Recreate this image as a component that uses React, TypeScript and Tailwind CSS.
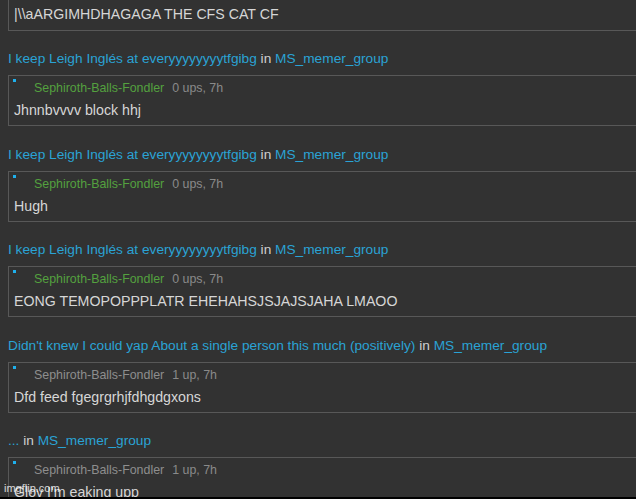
import React from 'react';

type Entry = {
  title: string;
  user: string;
  green: boolean;
  meta: string;
  text: string;
};

const entries: Entry[] = [
  { title: 'I keep Leigh Inglés at everyyyyyyyytfgibg', user: 'Sephiroth-Balls-Fondler', green: true, meta: '0 ups, 7h', text: 'Jhnnbvvvv block hhj' },
  { title: 'I keep Leigh Inglés at everyyyyyyyytfgibg', user: 'Sephiroth-Balls-Fondler', green: true, meta: '0 ups, 7h', text: 'Hugh' },
  { title: 'I keep Leigh Inglés at everyyyyyyyytfgibg', user: 'Sephiroth-Balls-Fondler', green: true, meta: '0 ups, 7h', text: 'EONG TEMOPOPPPLATR EHEHAHSJSJAJSJAHA LMAOO' },
  { title: "Didn't knew I could yap About a single person this much (positively)", user: 'Sephiroth-Balls-Fondler', green: false, meta: '1 up, 7h', text: 'Dfd feed fgegrgrhjfdhgdgxons' },
  { title: '...', user: 'Sephiroth-Balls-Fondler', green: false, meta: '1 up, 7h', text: "Glov I'm eaking upp" },
];

const CommentBox: React.FC<{ e: Entry }> = ({ e }) => (
  <div className="ml-2 border border-r-0 border-[#585858] pl-1 pt-[3px] pb-[6px]">
    <div className="flex items-start">
      <div className="w-[3px] h-[3px] bg-[#1fb0ec]" />
      <div className="ml-[18px] mt-[2px] flex items-center text-[12.4px] leading-[14px]">
        <span className={e.green ? 'text-[#54a13f]' : 'text-[#8e8e8e]'}>{e.user}</span>
        <span className="ml-[8px] text-[#8a8a8a]">{e.meta}</span>
      </div>
    </div>
    <div className="mt-[6px] pl-px text-[14.2px] leading-[18px] text-[#d6d6d6]">{e.text}</div>
  </div>
);

export default function App() {
  return (
    <div
      className="relative w-[636px] h-[499px] overflow-hidden bg-[#323232] border-b-2 border-black"
      style={{ fontFamily: '"Liberation Sans", Arial, sans-serif' }}
    >
      {/* tail of the previous comment */}
      <div className="ml-2 h-[31px] border-b border-l border-[#585858] pl-[5px] flex items-center text-[14.2px] text-[#d6d6d6]">
        |\\aARGIMHDHAGAGA THE CFS CAT CF
      </div>

      <div className="pt-[19px]">
        {entries.map((e, i) => (
          <div key={i} className="pb-[19.5px]">
            <div className="ml-2 text-[13.7px] leading-[17px] text-[#cfcfcf]">
              <span className="text-[#2aa3d5]">{e.title}</span> in{' '}
              <span className="text-[#2aa3d5]">MS_memer_group</span>
            </div>
            <div className="mt-2">
              <CommentBox e={e} />
            </div>
          </div>
        ))}
      </div>

      {/* watermark */}
      <div className="absolute left-[4px] bottom-[2px] text-[11px] leading-[14px] text-white/80">
        imgflip.com
      </div>
    </div>
  );
}
